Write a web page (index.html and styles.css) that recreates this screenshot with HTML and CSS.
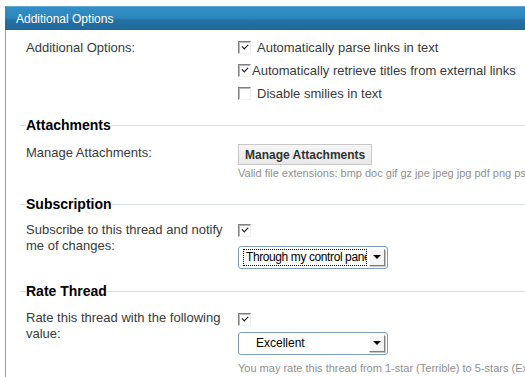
FILE: index.html
```html
<!DOCTYPE html>
<html lang="en">
<head>
  <meta charset="UTF-8" />
  <title>Additional Options</title>
  <link rel="stylesheet" href="styles.css">
</head>
<body>

<div class="panel">
  <div class="panel-head">Additional Options</div>

  <div class="panel-body">
    <div class="row">
      <div class="label label-tall">Additional Options:</div>
      <div class="field">
        <div class="opt"><span class="cb checked"></span><span class="opt-text">Automatically parse links in text</span></div>
        <div class="opt"><span class="cb checked"></span><span class="opt-text tight">Automatically retrieve titles from external links</span></div>
        <div class="opt"><span class="cb"></span><span class="opt-text">Disable smilies in text</span></div>
      </div>
    </div>

    <div class="legend">Attachments</div>
    <div class="row row-attach">
      <div class="label">Manage Attachments:</div>
      <div class="field">
        <button class="btn">Manage Attachments</button>
        <div class="hint">Valid file extensions: bmp doc gif gz jpe jpeg jpg pdf png psd txt zip</div>
      </div>
    </div>

    <div class="legend legend-sub">Subscription</div>
    <div class="row row-sub">
      <div class="label">Subscribe to this thread and notify me of changes:</div>
      <div class="field">
        <div class="cb-line"><span class="cb checked"></span></div>
        <div class="select">
          <span class="select-text focus">Through my control panel</span>
          <span class="select-arrow"></span>
        </div>
      </div>
    </div>

    <div class="legend legend-rate">Rate Thread</div>
    <div class="row row-rate">
      <div class="label">Rate this thread with the following value:</div>
      <div class="field">
        <div class="cb-line"><span class="cb checked"></span></div>
        <div class="select">
          <span class="select-text">Excellent</span>
          <span class="select-arrow"></span>
        </div>
        <div class="hint hint-rate">You may rate this thread from 1-star (Terrible) to 5-stars (Excellent)</div>
      </div>
    </div>
  </div>
</div>

</body>
</html>
```

FILE: styles.css
```css
* { box-sizing: border-box; margin: 0; padding: 0; }
html, body { width: 525px; height: 377px; overflow: hidden; }
body {
  background: #fff;
  font-family: "Liberation Sans", Arial, sans-serif;
  font-size: 13px;
  color: #3a3a3a;
}

.panel {
  margin: 6px 0 0 5px;
}

.panel-head {
  height: 24px;
  line-height: 24px;
  padding-left: 11px;
  font-size: 12px;
  color: #fff;
  border-top: 1px solid #5fa8d4;
  background: linear-gradient(to bottom, #3290c6 0, #2c86bd 45%, #246fa3 60%, #1f6a9c 100%);
}

.panel-body {
  border-left: 1px solid #8da3b7;
  padding: 6px 0 30px 20px;
}

.row {
  display: flex;
}

.label {
  width: 212px;
  flex-shrink: 0;
  line-height: 16px;
  padding-right: 14px;
}

.label-tall { line-height: 23px; }

.field {
  flex: 1;
  white-space: nowrap;
  overflow: hidden;
}

.opt {
  display: flex;
  align-items: center;
  height: 23px;
}

.opt-text { margin-left: 6px; }
.opt-text.tight { margin-left: 1px; }

/* sunken checkbox */
.cb {
  display: inline-block;
  width: 13px;
  height: 13px;
  background: #fff;
  border-top: 1px solid #808080;
  border-left: 1px solid #808080;
  border-right: 1px solid #f2f2f2;
  border-bottom: 1px solid #f2f2f2;
  box-shadow: inset 1px 1px 0 #b8b8b8;
  position: relative;
  flex-shrink: 0;
}

.cb.checked::after {
  content: "";
  position: absolute;
  left: 3px;
  top: 2px;
  width: 5px;
  height: 3px;
  border-left: 1.5px solid #111;
  border-bottom: 1.5px solid #111;
  transform: rotate(-45deg);
}

.legend {
  display: flex;
  align-items: center;
  margin: 11px 0 9px -6px;
  height: 18px;
  font-size: 14px;
  font-weight: bold;
  color: #000;
}

.legend::before,
.legend::after {
  content: "";
  height: 1px;
  background: #d6e0e8;
}

.legend::before { width: 6px; }
.legend::after { flex: 1; }

.legend-sub { margin-top: 15px; }
.legend-rate { margin-top: 13px; margin-bottom: 10px; }

.row-attach .label { line-height: 18px; padding-top: 1px; }

.btn {
  display: block;
  height: 21px;
  margin-top: 1px;
  padding: 0 6px;
  font-family: "Liberation Sans", Arial, sans-serif;
  font-size: 12px;
  font-weight: bold;
  color: #333;
  background: linear-gradient(to bottom, #f6f6f6 0, #e9e9e9 100%);
  border: 1px solid #c9c9c9;
}

.hint {
  font-size: 11px;
  line-height: 14px;
  color: #909090;
  margin-top: 1px;
}

.hint-rate { margin-top: 6px; }

.cb-line {
  height: 16px;
  display: flex;
  align-items: center;
}

.row-rate .cb-line { align-items: flex-end; }

.select {
  display: flex;
  align-items: center;
  width: 150px;
  height: 23px;
  margin-top: 8px;
  padding: 0 2px 0 4px;
  border: 1px solid #7f9db9;
  border-radius: 3px;
  background: #fff;
  color: #000;
  font-size: 12px;
}

.row-rate .select { margin-top: 6px; }

.select-text {
  flex: 1;
  overflow: hidden;
  height: 17px;
  line-height: 15px;
  padding-left: 2px;
  border: 1px solid transparent;
  letter-spacing: -0.4px;
}

.row-rate .select-text { padding-left: 12px; letter-spacing: 0; }

.select-text.focus { border: 1px dotted #000; }

.select-arrow {
  width: 16px;
  height: 17px;
  margin-left: 2px;
  position: relative;
  background: #f4f4f4;
  border-top: 1px solid #fff;
  border-left: 1px solid #fff;
  border-right: 1px solid #808080;
  border-bottom: 1px solid #808080;
  box-shadow: 1px 1px 0 #c8c8c8;
}

.select-arrow::after {
  content: "";
  position: absolute;
  left: 3px;
  top: 5px;
  border-left: 4px solid transparent;
  border-right: 4px solid transparent;
  border-top: 4px solid #000;
}
```
